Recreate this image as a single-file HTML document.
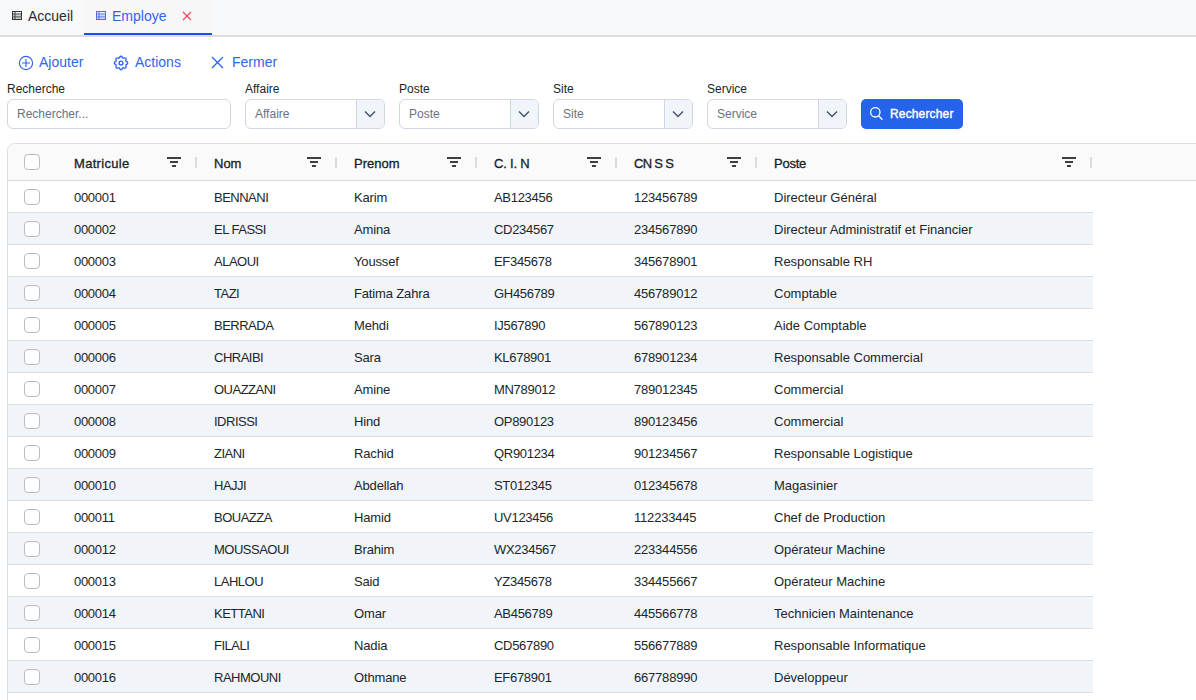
<!DOCTYPE html>
<html><head><meta charset="utf-8">
<style>
*{box-sizing:border-box;margin:0;padding:0}
html,body{width:1196px;height:700px;overflow:hidden;background:#fff;font-family:"Liberation Sans",sans-serif;color:#212529}
.abs{position:absolute}
#tabbar{position:absolute;left:0;top:0;width:1196px;height:35px;background:#f8f9fb}
#tabline{position:absolute;left:0;top:35px;width:1196px;height:2px;background:#dedede}
#acttab{position:absolute;left:84px;top:0;width:128px;height:35px;background:#f7f7f7}
#actline{position:absolute;left:84px;top:33px;width:128px;height:2px;background:#1652e6}
.t14{position:absolute;font-size:14px;line-height:16px;white-space:pre}
.t12{position:absolute;font-size:12px;line-height:14px;white-space:pre}
.blue{color:#2f65ee}
.inp{position:absolute;top:99px;height:30px;border:1px solid #cfd8e3;border-radius:6px;background:#fff}
.sel .btn{position:absolute;right:0;top:0;width:28px;height:28px;background:#f1f4f8;border-left:1px solid #cdd6e2;border-radius:0 5px 5px 0}
.ph{position:absolute;left:9px;top:7px;font-size:12px;line-height:14px;color:#687282;white-space:pre}
#search{position:absolute;left:861px;top:99px;width:102px;height:30px;background:#2563eb;border-radius:5px}
#grid{position:absolute;left:7px;top:143px;width:1300px;height:700px;border:1px solid #dedede;border-radius:8px;overflow:hidden;background:#fff}
#ghead{position:absolute;left:0;top:0;width:1300px;height:37px;background:#fafafa;border-bottom:1px solid #dcdcdc}
.hc{position:absolute;top:12px;font-size:13px;line-height:15px;-webkit-text-stroke:0.3px #181d1f;color:#181d1f;white-space:pre}
.sep{position:absolute;top:13px;width:2px;height:11px;background:#dcdcdc}
.flt{position:absolute;top:13px;width:14px;height:10px}
.cb{position:absolute;left:16px;width:16px;height:16px;border:1px solid #b9bcbf;border-radius:4px;background:#fff}
.row{position:absolute;left:0;width:1085px;height:32px;border-bottom:1px solid #dddddd;background:#fff}
.row.odd{background:#f1f4f9}
.row .cb{top:8px}
.c{position:absolute;top:9px;font-size:13px;line-height:15px;color:#212529;white-space:pre}
</style></head><body>
<div id="tabbar"></div>
<div id="acttab"></div>
<div id="actline"></div>
<div id="tabline"></div>
<!-- tab icons -->
<svg class="abs" style="left:12px;top:11px" width="10" height="9" viewBox="0 0 10 9"><rect x="1" y="4.5" width="8" height="3" fill="#a0a0a0"/><rect x="0.5" y="0.5" width="9" height="8" fill="none" stroke="#333"/><line x1="0" y1="3" x2="10" y2="3" stroke="#333"/><line x1="0" y1="5.6" x2="10" y2="5.6" stroke="#666" stroke-width="0.6"/><line x1="3" y1="0" x2="3" y2="9" stroke="#333" stroke-width="0.9"/></svg>
<div class="t14" style="left:28px;top:8px;color:#2b2b2b">Accueil</div>
<svg class="abs" style="left:96px;top:11px" width="10" height="9" viewBox="0 0 10 9"><rect x="1" y="4.5" width="8" height="3" fill="#a9bdf3"/><rect x="0.5" y="0.5" width="9" height="8" fill="none" stroke="#4a6ee6"/><line x1="0" y1="3" x2="10" y2="3" stroke="#4a6ee6"/><line x1="0" y1="5.6" x2="10" y2="5.6" stroke="#6f8ce8" stroke-width="0.6"/><line x1="3" y1="0" x2="3" y2="9" stroke="#4a6ee6" stroke-width="0.9"/></svg>
<div class="t14 blue" style="left:112px;top:8px">Employe</div>
<svg class="abs" style="left:182px;top:11px" width="10" height="10" viewBox="0 0 10 10"><path d="M1 1L9 9M9 1L1 9" stroke="#ef4452" stroke-width="1.1"/></svg>

<!-- toolbar -->
<svg class="abs" style="left:18px;top:55px" width="16" height="16" viewBox="0 0 16 16"><circle cx="8" cy="8" r="6.6" fill="none" stroke="#2f65ee" stroke-width="1.15"/><path d="M8 4V12M4 8H12" stroke="#2f65ee" stroke-width="1.15"/></svg>
<div class="t14 blue" style="left:39px;top:54px">Ajouter</div>
<svg class="abs" style="left:112px;top:54px" width="18" height="18" viewBox="0 0 24 24"><g fill="none" stroke="#2f65ee" stroke-width="1.75" stroke-linecap="round" stroke-linejoin="round"><path d="M10.325 4.317c.426-1.756 2.924-1.756 3.35 0a1.724 1.724 0 002.573 1.066c1.543-.94 3.31.826 2.37 2.37a1.724 1.724 0 001.065 2.572c1.756.426 1.756 2.924 0 3.35a1.724 1.724 0 00-1.066 2.573c.94 1.543-.826 3.31-2.37 2.37a1.724 1.724 0 00-2.572 1.065c-.426 1.756-2.924 1.756-3.35 0a1.724 1.724 0 00-2.573-1.066c-1.543.94-3.31-.826-2.37-2.37a1.724 1.724 0 00-1.065-2.572c-1.756-.426-1.756-2.924 0-3.35a1.724 1.724 0 001.066-2.573c-.94-1.543.826-3.31 2.37-2.37.996.608 2.296.07 2.572-1.065z"/><circle cx="12" cy="12" r="2.6"/></g></svg>
<div class="t14 blue" style="left:135px;top:54px">Actions</div>
<svg class="abs" style="left:211px;top:56px" width="13" height="13" viewBox="0 0 13 13"><path d="M1 1L12 12M12 1L1 12" stroke="#2f65ee" stroke-width="1.4"/></svg>
<div class="t14 blue" style="left:232px;top:54px">Fermer</div>

<!-- filters -->
<div class="t12" style="left:7px;top:82px">Recherche</div>
<div class="inp" style="left:7px;width:224px"><span class="ph">Rechercher...</span></div>
<div class="t12" style="left:245px;top:82px">Affaire</div>
<div class="inp sel" style="left:245px;width:140px"><span class="ph">Affaire</span><div class="btn"><svg class="abs" style="left:7px;top:10px" width="12" height="8" viewBox="0 0 12 8"><path d="M1 1.5L6 6.5L11 1.5" fill="none" stroke="#475569" stroke-width="1.5"/></svg></div></div>
<div class="t12" style="left:399px;top:82px">Poste</div>
<div class="inp sel" style="left:399px;width:140px"><span class="ph">Poste</span><div class="btn"><svg class="abs" style="left:7px;top:10px" width="12" height="8" viewBox="0 0 12 8"><path d="M1 1.5L6 6.5L11 1.5" fill="none" stroke="#475569" stroke-width="1.5"/></svg></div></div>
<div class="t12" style="left:553px;top:82px">Site</div>
<div class="inp sel" style="left:553px;width:140px"><span class="ph">Site</span><div class="btn"><svg class="abs" style="left:7px;top:10px" width="12" height="8" viewBox="0 0 12 8"><path d="M1 1.5L6 6.5L11 1.5" fill="none" stroke="#475569" stroke-width="1.5"/></svg></div></div>
<div class="t12" style="left:707px;top:82px">Service</div>
<div class="inp sel" style="left:707px;width:140px"><span class="ph">Service</span><div class="btn"><svg class="abs" style="left:7px;top:10px" width="12" height="8" viewBox="0 0 12 8"><path d="M1 1.5L6 6.5L11 1.5" fill="none" stroke="#475569" stroke-width="1.5"/></svg></div></div>
<div id="search"><svg class="abs" style="left:9px;top:8px" width="14" height="14" viewBox="0 0 14 14"><circle cx="5.3" cy="5.3" r="4.7" fill="none" stroke="#fff" stroke-width="1.3"/><path d="M8.6 8.8L12 12.2" stroke="#fff" stroke-width="1.4" stroke-linecap="round"/></svg><span class="abs" style="left:29px;top:8px;font-size:12px;line-height:14px;color:#fff;-webkit-text-stroke:0.4px #fff;letter-spacing:0.15px;white-space:pre">Rechercher</span></div>

<!-- grid -->
<div id="grid">
<div id="ghead">
<i class="cb" style="top:10px"></i>
<span class="hc" style="left:66px;letter-spacing:0.3px">Matricule</span>
<span class="hc" style="left:206px">Nom</span>
<span class="hc" style="left:346px">Prenom</span>
<span class="hc" style="left:486px;letter-spacing:-0.2px">C. I. N</span>
<span class="hc" style="left:626px;letter-spacing:-0.7px">CN S S</span>
<span class="hc" style="left:766px;letter-spacing:-0.25px">Poste</span>
<span class="sep" style="left:187px"></span><svg class="flt" style="left:159px" width="14" height="10" viewBox="0 0 14 10"><rect x="0" y="0" width="14" height="2" fill="#3c4043"/><rect x="3" y="4" width="8" height="2" fill="#3c4043"/><rect x="5" y="8" width="4" height="2" fill="#3c4043"/></svg>
<span class="sep" style="left:327px"></span><svg class="flt" style="left:299px" width="14" height="10" viewBox="0 0 14 10"><rect x="0" y="0" width="14" height="2" fill="#3c4043"/><rect x="3" y="4" width="8" height="2" fill="#3c4043"/><rect x="5" y="8" width="4" height="2" fill="#3c4043"/></svg>
<span class="sep" style="left:467px"></span><svg class="flt" style="left:439px" width="14" height="10" viewBox="0 0 14 10"><rect x="0" y="0" width="14" height="2" fill="#3c4043"/><rect x="3" y="4" width="8" height="2" fill="#3c4043"/><rect x="5" y="8" width="4" height="2" fill="#3c4043"/></svg>
<span class="sep" style="left:607px"></span><svg class="flt" style="left:579px" width="14" height="10" viewBox="0 0 14 10"><rect x="0" y="0" width="14" height="2" fill="#3c4043"/><rect x="3" y="4" width="8" height="2" fill="#3c4043"/><rect x="5" y="8" width="4" height="2" fill="#3c4043"/></svg>
<span class="sep" style="left:747px"></span><svg class="flt" style="left:719px" width="14" height="10" viewBox="0 0 14 10"><rect x="0" y="0" width="14" height="2" fill="#3c4043"/><rect x="3" y="4" width="8" height="2" fill="#3c4043"/><rect x="5" y="8" width="4" height="2" fill="#3c4043"/></svg>
<span class="sep" style="left:1082px"></span><svg class="flt" style="left:1054px" width="14" height="10" viewBox="0 0 14 10"><rect x="0" y="0" width="14" height="2" fill="#3c4043"/><rect x="3" y="4" width="8" height="2" fill="#3c4043"/><rect x="5" y="8" width="4" height="2" fill="#3c4043"/></svg>
</div>
<div class="row" style="top:37px"><i class="cb"></i><span class="c" style="left:66px;letter-spacing:-0.3px">000001</span><span class="c" style="left:206px;letter-spacing:-0.5px">BENNANI</span><span class="c" style="left:346px;letter-spacing:-0.15px">Karim</span><span class="c" style="left:486px;letter-spacing:-0.3px">AB123456</span><span class="c" style="left:626px;letter-spacing:-0.2px">123456789</span><span class="c" style="left:766px;letter-spacing:0">Directeur Général</span></div>
<div class="row odd" style="top:69px"><i class="cb"></i><span class="c" style="left:66px;letter-spacing:-0.3px">000002</span><span class="c" style="left:206px;letter-spacing:-0.5px">EL FASSI</span><span class="c" style="left:346px;letter-spacing:-0.15px">Amina</span><span class="c" style="left:486px;letter-spacing:-0.3px">CD234567</span><span class="c" style="left:626px;letter-spacing:-0.2px">234567890</span><span class="c" style="left:766px;letter-spacing:0">Directeur Administratif et Financier</span></div>
<div class="row" style="top:101px"><i class="cb"></i><span class="c" style="left:66px;letter-spacing:-0.3px">000003</span><span class="c" style="left:206px;letter-spacing:-0.5px">ALAOUI</span><span class="c" style="left:346px;letter-spacing:-0.15px">Youssef</span><span class="c" style="left:486px;letter-spacing:-0.3px">EF345678</span><span class="c" style="left:626px;letter-spacing:-0.2px">345678901</span><span class="c" style="left:766px;letter-spacing:0">Responsable RH</span></div>
<div class="row odd" style="top:133px"><i class="cb"></i><span class="c" style="left:66px;letter-spacing:-0.3px">000004</span><span class="c" style="left:206px;letter-spacing:-0.5px">TAZI</span><span class="c" style="left:346px;letter-spacing:-0.15px">Fatima Zahra</span><span class="c" style="left:486px;letter-spacing:-0.3px">GH456789</span><span class="c" style="left:626px;letter-spacing:-0.2px">456789012</span><span class="c" style="left:766px;letter-spacing:0">Comptable</span></div>
<div class="row" style="top:165px"><i class="cb"></i><span class="c" style="left:66px;letter-spacing:-0.3px">000005</span><span class="c" style="left:206px;letter-spacing:-0.5px">BERRADA</span><span class="c" style="left:346px;letter-spacing:-0.15px">Mehdi</span><span class="c" style="left:486px;letter-spacing:-0.3px">IJ567890</span><span class="c" style="left:626px;letter-spacing:-0.2px">567890123</span><span class="c" style="left:766px;letter-spacing:0">Aide Comptable</span></div>
<div class="row odd" style="top:197px"><i class="cb"></i><span class="c" style="left:66px;letter-spacing:-0.3px">000006</span><span class="c" style="left:206px;letter-spacing:-0.5px">CHRAIBI</span><span class="c" style="left:346px;letter-spacing:-0.15px">Sara</span><span class="c" style="left:486px;letter-spacing:-0.3px">KL678901</span><span class="c" style="left:626px;letter-spacing:-0.2px">678901234</span><span class="c" style="left:766px;letter-spacing:0">Responsable Commercial</span></div>
<div class="row" style="top:229px"><i class="cb"></i><span class="c" style="left:66px;letter-spacing:-0.3px">000007</span><span class="c" style="left:206px;letter-spacing:-0.5px">OUAZZANI</span><span class="c" style="left:346px;letter-spacing:-0.15px">Amine</span><span class="c" style="left:486px;letter-spacing:-0.3px">MN789012</span><span class="c" style="left:626px;letter-spacing:-0.2px">789012345</span><span class="c" style="left:766px;letter-spacing:0">Commercial</span></div>
<div class="row odd" style="top:261px"><i class="cb"></i><span class="c" style="left:66px;letter-spacing:-0.3px">000008</span><span class="c" style="left:206px;letter-spacing:-0.5px">IDRISSI</span><span class="c" style="left:346px;letter-spacing:-0.15px">Hind</span><span class="c" style="left:486px;letter-spacing:-0.3px">OP890123</span><span class="c" style="left:626px;letter-spacing:-0.2px">890123456</span><span class="c" style="left:766px;letter-spacing:0">Commercial</span></div>
<div class="row" style="top:293px"><i class="cb"></i><span class="c" style="left:66px;letter-spacing:-0.3px">000009</span><span class="c" style="left:206px;letter-spacing:-0.5px">ZIANI</span><span class="c" style="left:346px;letter-spacing:-0.15px">Rachid</span><span class="c" style="left:486px;letter-spacing:-0.3px">QR901234</span><span class="c" style="left:626px;letter-spacing:-0.2px">901234567</span><span class="c" style="left:766px;letter-spacing:0">Responsable Logistique</span></div>
<div class="row odd" style="top:325px"><i class="cb"></i><span class="c" style="left:66px;letter-spacing:-0.3px">000010</span><span class="c" style="left:206px;letter-spacing:-0.5px">HAJJI</span><span class="c" style="left:346px;letter-spacing:-0.15px">Abdellah</span><span class="c" style="left:486px;letter-spacing:-0.3px">ST012345</span><span class="c" style="left:626px;letter-spacing:-0.2px">012345678</span><span class="c" style="left:766px;letter-spacing:0">Magasinier</span></div>
<div class="row" style="top:357px"><i class="cb"></i><span class="c" style="left:66px;letter-spacing:-0.3px">000011</span><span class="c" style="left:206px;letter-spacing:-0.5px">BOUAZZA</span><span class="c" style="left:346px;letter-spacing:-0.15px">Hamid</span><span class="c" style="left:486px;letter-spacing:-0.3px">UV123456</span><span class="c" style="left:626px;letter-spacing:-0.2px">112233445</span><span class="c" style="left:766px;letter-spacing:0">Chef de Production</span></div>
<div class="row odd" style="top:389px"><i class="cb"></i><span class="c" style="left:66px;letter-spacing:-0.3px">000012</span><span class="c" style="left:206px;letter-spacing:-0.5px">MOUSSAOUI</span><span class="c" style="left:346px;letter-spacing:-0.15px">Brahim</span><span class="c" style="left:486px;letter-spacing:-0.3px">WX234567</span><span class="c" style="left:626px;letter-spacing:-0.2px">223344556</span><span class="c" style="left:766px;letter-spacing:0">Opérateur Machine</span></div>
<div class="row" style="top:421px"><i class="cb"></i><span class="c" style="left:66px;letter-spacing:-0.3px">000013</span><span class="c" style="left:206px;letter-spacing:-0.5px">LAHLOU</span><span class="c" style="left:346px;letter-spacing:-0.15px">Said</span><span class="c" style="left:486px;letter-spacing:-0.3px">YZ345678</span><span class="c" style="left:626px;letter-spacing:-0.2px">334455667</span><span class="c" style="left:766px;letter-spacing:0">Opérateur Machine</span></div>
<div class="row odd" style="top:453px"><i class="cb"></i><span class="c" style="left:66px;letter-spacing:-0.3px">000014</span><span class="c" style="left:206px;letter-spacing:-0.5px">KETTANI</span><span class="c" style="left:346px;letter-spacing:-0.15px">Omar</span><span class="c" style="left:486px;letter-spacing:-0.3px">AB456789</span><span class="c" style="left:626px;letter-spacing:-0.2px">445566778</span><span class="c" style="left:766px;letter-spacing:0">Technicien Maintenance</span></div>
<div class="row" style="top:485px"><i class="cb"></i><span class="c" style="left:66px;letter-spacing:-0.3px">000015</span><span class="c" style="left:206px;letter-spacing:-0.5px">FILALI</span><span class="c" style="left:346px;letter-spacing:-0.15px">Nadia</span><span class="c" style="left:486px;letter-spacing:-0.3px">CD567890</span><span class="c" style="left:626px;letter-spacing:-0.2px">556677889</span><span class="c" style="left:766px;letter-spacing:0">Responsable Informatique</span></div>
<div class="row odd" style="top:517px"><i class="cb"></i><span class="c" style="left:66px;letter-spacing:-0.3px">000016</span><span class="c" style="left:206px;letter-spacing:-0.5px">RAHMOUNI</span><span class="c" style="left:346px;letter-spacing:-0.15px">Othmane</span><span class="c" style="left:486px;letter-spacing:-0.3px">EF678901</span><span class="c" style="left:626px;letter-spacing:-0.2px">667788990</span><span class="c" style="left:766px;letter-spacing:0">Développeur</span></div>
<div class="row" style="top:549px"><i class="cb"></i><span class="c" style="left:66px;letter-spacing:-0.3px">000017</span></div>
</div>
</body></html>
